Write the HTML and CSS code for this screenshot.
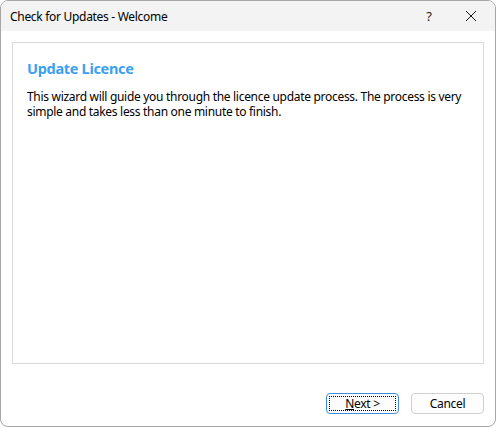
FILE: index.html
```html
<!DOCTYPE html>
<html>
<head>
<meta charset="utf-8">
<link rel="stylesheet" href="styles.css">
</head>
<body>
<div class="window">
  <div class="titlebar">
    <span class="title">Check for Updates - Welcome</span>
    <div class="controls">
      <span class="help">?</span>
      <svg class="close" width="12" height="12" viewBox="0 0 12 12"><path d="M1 1 L11 11 M11 1 L1 11" stroke="#1a1a1a" stroke-width="1" fill="none"/></svg>
    </div>
  </div>
  <div class="body">
    <div class="panel">
      <h1 class="heading">Update Licence</h1>
      <p class="desc">This wizard will guide you through the licence update process. The process is very simple and takes less than one minute to finish.</p>
    </div>
    <div class="buttons">
      <button class="btn btn-default"><span class="focus"><u>N</u>ext &gt;</span></button>
      <button class="btn">Cancel</button>
    </div>
  </div>
</div>
</body>
</html>
```
FILE: styles.css
```css
html, body {
  margin: 0;
  padding: 0;
  background: #ffffff;
}
.window {
  width: 496px;
  height: 427px;
  box-sizing: border-box;
  border: 1px solid #a6a6a6;
  border-radius: 8px;
  overflow: hidden;
  display: flex;
  flex-direction: column;
  font-family: "Noto Sans", "Open Sans", sans-serif;
  font-size: 12px;
  letter-spacing: -0.3px;
  color: #000;
  background: #fff;
}
.titlebar {
  height: 30px;
  background: #f3f3f3;
  display: flex;
  align-items: center;
  justify-content: space-between;
  padding-left: 9px;
  flex: none;
}
.title {
  font-size: 12px;
}
.controls {
  display: flex;
  align-items: center;
  height: 100%;
}
.help {
  width: 46px;
  text-align: center;
  font-size: 13px;
  color: #1a1a1a;
}
.close {
  margin: 0 18px 0 13px;
}
.body {
  flex: 1;
  display: flex;
  flex-direction: column;
  padding: 11px 11px 12px 11px;
}
.panel {
  flex: 1;
  border: 1px solid #d9d9d9;
  padding: 13px 14px;
}
.heading {
  margin: 0;
  font-size: 14.5px;
  font-weight: bold;
  color: #3aa0f2;
  line-height: 24px;
}
.desc {
  margin: 9px 0 0 0;
  line-height: 15px;
  font-size: 12px;
}
.buttons {
  display: flex;
  justify-content: flex-end;
  gap: 12px;
  margin-top: 29px;
}
.btn {
  width: 73px;
  height: 21px;
  box-sizing: border-box;
  border: 1px solid #d0d0d0;
  border-radius: 4px;
  background: #fdfdfd;
  font-family: inherit;
  font-size: 12px;
  letter-spacing: -0.3px;
  color: #000;
  padding: 0;
  display: flex;
  align-items: center;
  justify-content: center;
}
.btn-default {
  border-color: #3d8ee0;
  padding: 2px;
}
.focus {
  flex: 1;
  align-self: stretch;
  border: 1px dotted #000;
  display: flex;
  align-items: center;
  justify-content: center;
}
```
